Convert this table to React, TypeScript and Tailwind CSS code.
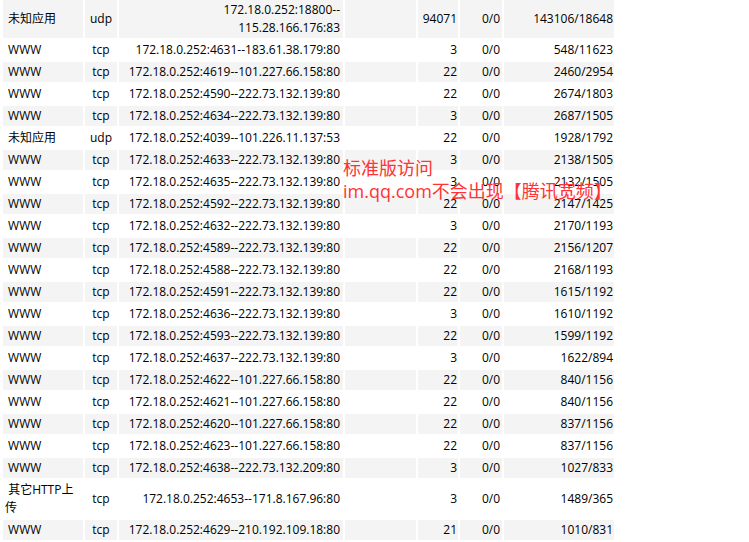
import React from "react";

type Row = {
  app: React.ReactNode;
  proto: string;
  conn: React.ReactNode;
  count: string;
  drops: string;
  bytes: string;
};

const nb = "\u00a0";

const rows: Row[] = [
  {
    app: nb + "未知应用",
    proto: "udp",
    conn: (
      <>
        172.18.0.252:18800--
        <br />
        115.28.166.176:83
      </>
    ),
    count: "94071",
    drops: "0/0",
    bytes: "143106/18648",
  },
  { app: nb + "WWW", proto: "tcp", conn: "172.18.0.252:4631--183.61.38.179:80", count: "3", drops: "0/0", bytes: "548/11623" },
  { app: nb + "WWW", proto: "tcp", conn: "172.18.0.252:4619--101.227.66.158:80", count: "22", drops: "0/0", bytes: "2460/2954" },
  { app: nb + "WWW", proto: "tcp", conn: "172.18.0.252:4590--222.73.132.139:80", count: "22", drops: "0/0", bytes: "2674/1803" },
  { app: nb + "WWW", proto: "tcp", conn: "172.18.0.252:4634--222.73.132.139:80", count: "3", drops: "0/0", bytes: "2687/1505" },
  { app: nb + "未知应用", proto: "udp", conn: "172.18.0.252:4039--101.226.11.137:53", count: "22", drops: "0/0", bytes: "1928/1792" },
  { app: nb + "WWW", proto: "tcp", conn: "172.18.0.252:4633--222.73.132.139:80", count: "3", drops: "0/0", bytes: "2138/1505" },
  { app: nb + "WWW", proto: "tcp", conn: "172.18.0.252:4635--222.73.132.139:80", count: "3", drops: "0/0", bytes: "2132/1505" },
  { app: nb + "WWW", proto: "tcp", conn: "172.18.0.252:4592--222.73.132.139:80", count: "22", drops: "0/0", bytes: "2147/1425" },
  { app: nb + "WWW", proto: "tcp", conn: "172.18.0.252:4632--222.73.132.139:80", count: "3", drops: "0/0", bytes: "2170/1193" },
  { app: nb + "WWW", proto: "tcp", conn: "172.18.0.252:4589--222.73.132.139:80", count: "22", drops: "0/0", bytes: "2156/1207" },
  { app: nb + "WWW", proto: "tcp", conn: "172.18.0.252:4588--222.73.132.139:80", count: "22", drops: "0/0", bytes: "2168/1193" },
  { app: nb + "WWW", proto: "tcp", conn: "172.18.0.252:4591--222.73.132.139:80", count: "22", drops: "0/0", bytes: "1615/1192" },
  { app: nb + "WWW", proto: "tcp", conn: "172.18.0.252:4636--222.73.132.139:80", count: "3", drops: "0/0", bytes: "1610/1192" },
  { app: nb + "WWW", proto: "tcp", conn: "172.18.0.252:4593--222.73.132.139:80", count: "22", drops: "0/0", bytes: "1599/1192" },
  { app: nb + "WWW", proto: "tcp", conn: "172.18.0.252:4637--222.73.132.139:80", count: "3", drops: "0/0", bytes: "1622/894" },
  { app: nb + "WWW", proto: "tcp", conn: "172.18.0.252:4622--101.227.66.158:80", count: "22", drops: "0/0", bytes: "840/1156" },
  { app: nb + "WWW", proto: "tcp", conn: "172.18.0.252:4621--101.227.66.158:80", count: "22", drops: "0/0", bytes: "840/1156" },
  { app: nb + "WWW", proto: "tcp", conn: "172.18.0.252:4620--101.227.66.158:80", count: "22", drops: "0/0", bytes: "837/1156" },
  { app: nb + "WWW", proto: "tcp", conn: "172.18.0.252:4623--101.227.66.158:80", count: "22", drops: "0/0", bytes: "837/1156" },
  { app: nb + "WWW", proto: "tcp", conn: "172.18.0.252:4638--222.73.132.209:80", count: "3", drops: "0/0", bytes: "1027/833" },
  {
    app: (
      <>
        {nb}其它HTTP上
        <br />传
      </>
    ),
    proto: "tcp",
    conn: "172.18.0.252:4653--171.8.167.96:80",
    count: "3",
    drops: "0/0",
    bytes: "1489/365",
  },
  { app: nb + "WWW", proto: "tcp", conn: "172.18.0.252:4629--210.192.109.18:80", count: "21", drops: "0/0", bytes: "1010/831" },
];

export default function App() {
  return (
    <div className="relative w-[749px] h-[542px] overflow-hidden bg-white text-[12px] leading-[18px] text-black font-['Open_Sans','Noto_Sans_CJK_SC',sans-serif]">
      <table className="ml-[1px] -mt-[2px] table-fixed border-separate border-spacing-[2px] w-[615px]">
        <colgroup>
          <col className="w-[80px]" />
          <col className="w-[32px]" />
          <col className="w-[224px]" />
          <col className="w-[71px]" />
          <col className="w-[40px]" />
          <col className="w-[42px]" />
          <col className="w-[110px]" />
        </colgroup>
        <tbody>
          {rows.map((r, i) => (
            <tr key={i} className={i % 2 === 0 ? "bg-[#f4f4f4]" : "bg-white"}>
              <td className="p-[1px] pl-[2px] text-left align-middle">{r.app}</td>
              <td className="p-[1px] text-center align-middle">{r.proto}</td>
              <td className="p-[1px] pr-[3px] text-right align-middle whitespace-nowrap">{r.conn}</td>
              <td className="p-[1px]"></td>
              <td className="p-[1px] text-right align-middle">{r.count}</td>
              <td className="p-[1px] pr-[2px] text-right align-middle">{r.drops}</td>
              <td className="p-[1px] text-right align-middle">{r.bytes}</td>
            </tr>
          ))}
        </tbody>
      </table>

      {/* red note laid over the table */}
      <div className="absolute left-[343px] top-[157px] text-[18px] leading-[23px] text-[#ff3333] whitespace-nowrap">
        <div>标准版访问</div>
        <div>im.qq.com不会出现【腾讯宽频】</div>
      </div>
    </div>
  );
}
